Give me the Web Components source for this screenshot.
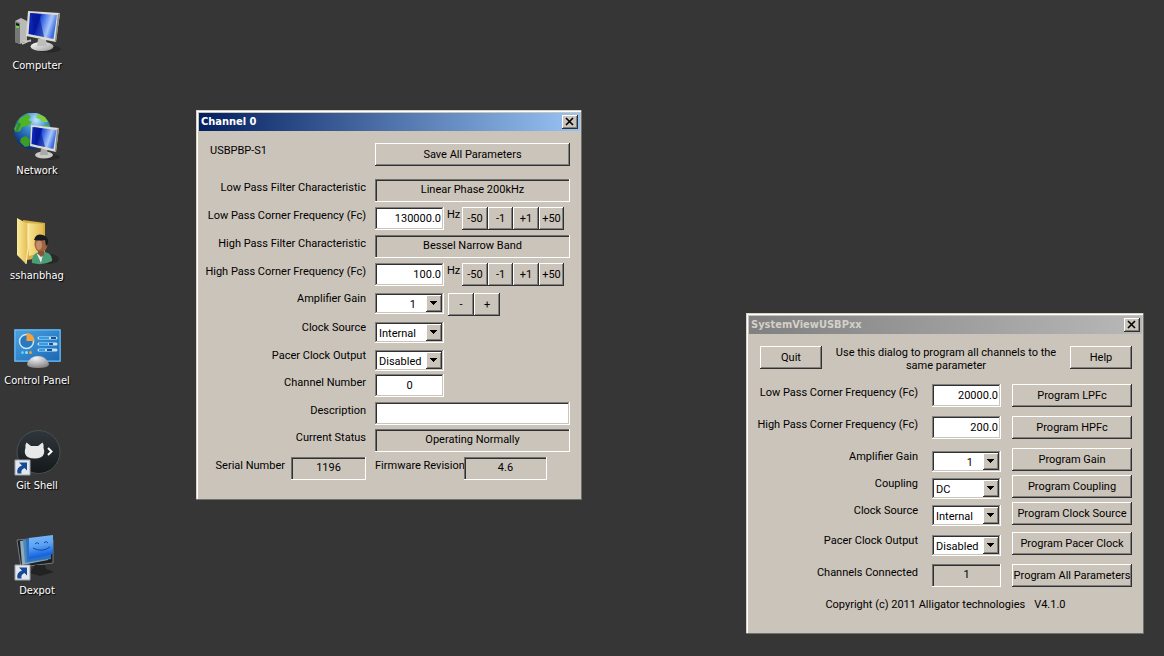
<!DOCTYPE html>
<html lang="en">
<head>
<meta charset="utf-8">
<title>Desktop</title>
<style>
  html, body { margin: 0; height: 100%; }
  body { background: #363636; overflow: hidden; }
</style>
</head>
<body>
<desk-top>
  <desk-icon slot="icons" label="Computer">
    <svg viewBox="0 0 48 48" aria-hidden="true">
      <defs>
        <linearGradient id="scr" x1="0" y1="0" x2="1" y2="0.3"><stop offset="0" stop-color="#0e2fc0"/><stop offset=".4" stop-color="#0519a8"/><stop offset=".45" stop-color="#1d4fe0"/><stop offset=".8" stop-color="#a9c6f8"/><stop offset="1" stop-color="#3d6ee6"/></linearGradient>
        <linearGradient id="met" x1="0" y1="0" x2="1" y2="1"><stop offset="0" stop-color="#fff"/><stop offset="1" stop-color="#9a9a98"/></linearGradient>
      </defs>
      <ellipse cx="36" cy="41" rx="12" ry="3.500" fill="#282828"/>
      <path d="M2 13l6-3 6 3v20l-7 3-5-2z" fill="#b9b9b7"/><path d="M2 13l5 2v21l-5-2z" fill="#777"/><path d="M3 15l3 1v2l-3-1z" fill="#111"/><path d="M3 18h3v2H3z" fill="#5fdc32"/>
      <path d="M9 36l9-4M10 33h8" stroke="#c4c4c0" stroke-width="1.500"/>
      <ellipse cx="29" cy="38.500" rx="11.500" ry="4.500" fill="url(#met)"/><path d="M25 31h8l1 7h-10z" fill="#bdbdbb"/>
      <path d="M15 3l32 2-4 29-30-6z" fill="#dedbd2"/><path d="M47 5l-4 29-1-1 3-27z" fill="#8b8b88"/>
      <path d="M17 5l27 2-3.500 24-25-5z" fill="url(#scr)"/><path d="M18 5l8 1 5 23-9-2z" fill="#061590" opacity=".6"/>
    </svg>
  </desk-icon>
  <desk-icon slot="icons" label="Network">
    <svg viewBox="0 0 48 48" aria-hidden="true">
      <defs>
        <radialGradient id="glb" cx=".6" cy=".2" r=".8"><stop offset="0" stop-color="#bfe6fa"/><stop offset=".4" stop-color="#3a8bd0"/><stop offset="1" stop-color="#0c2f7c"/></radialGradient>
        <linearGradient id="scr2" x1="0" y1="0" x2="1" y2="0.3"><stop offset="0" stop-color="#0e2fc0"/><stop offset=".4" stop-color="#0519a8"/><stop offset=".45" stop-color="#1d4fe0"/><stop offset=".8" stop-color="#a9c6f8"/><stop offset="1" stop-color="#3d6ee6"/></linearGradient>
      </defs>
      <circle cx="19.500" cy="18" r="18.500" fill="url(#glb)"/>
      <path d="M7 5l8-4 3 3-3 3 4 2-4 4-6 1-2 4-4 1-2-3z" fill="#4db526"/><path d="M25 1l7 3 3 5-6 0-2-3-4-1z" fill="#7cd03c"/><path d="M8 25l5-2 4 4-1 6-4 1-5-5z" fill="#3c9c24"/><path d="M31 12l5 0 1 6-4 1z" fill="#49b428"/><path d="M5 9l3 2-3 8-3 0z" fill="#2f8f3c"/>
      <ellipse cx="37" cy="44" rx="10" ry="3" fill="#282828"/>
      <ellipse cx="31" cy="42" rx="9" ry="3.500" fill="#c9c9c6"/><path d="M28 36h6l1 6h-8z" fill="#aaa"/>
      <path d="M18 12l28 3-3 24-26-6z" fill="#dedbd2"/><path d="M46 15l-3 24-1-1 2-22z" fill="#8b8b88"/>
      <path d="M19.500 14l24 3-3 19-22-5z" fill="url(#scr2)"/><path d="M21 14l6 1 5 19-9-2z" fill="#061590" opacity=".6"/>
    </svg>
  </desk-icon>
  <desk-icon slot="icons" label="sshanbhag">
    <svg viewBox="0 0 48 48" aria-hidden="true">
      <defs><linearGradient id="fol" x1="0" y1="0" x2="1" y2="0"><stop offset="0" stop-color="#fbeb9c"/><stop offset="1" stop-color="#e3bb52"/></linearGradient></defs>
      <path d="M10 2l22 3v34l-18 3z" fill="#d8ae43"/><path d="M13 5l17 1v28l-14 4z" fill="url(#fol)"/>
      <path d="M4 0l11 6-1 34-1 6L4 37z" fill="url(#fol)"/><path d="M15 6v24l-2 16" stroke="#fff3bb" fill="none"/>
      <ellipse cx="36" cy="41" rx="10" ry="5" fill="#282828"/>
      <path d="M19 45q-1-9 7-11h6q8 2 7 9-9 5-20 2z" fill="#4b9d76"/><path d="M24 36l4 9 2-9z" fill="#e8eef0"/>
      <ellipse cx="28" cy="26" rx="6.500" ry="8.500" fill="#9c6543"/><path d="M25 33h6v4l-3 2-3-3z" fill="#8b5535"/>
      <ellipse cx="26" cy="27" rx="3" ry="5" fill="#c58d66"/>
      <path d="M21 22q2-7 9-5 6 2 5 9l-2 2-1-6q-5 1-11 0z" fill="#191a1c"/>
    </svg>
  </desk-icon>
  <desk-icon slot="icons" label="Control Panel">
    <svg viewBox="0 0 48 48" aria-hidden="true">
      <defs><linearGradient id="cp" x1="0" y1="0" x2="1" y2="1"><stop offset="0" stop-color="#4aa2e0"/><stop offset="1" stop-color="#1c68b4"/></linearGradient>
      <radialGradient id="dome" cx=".4" cy=".2" r=".8"><stop offset="0" stop-color="#f4f4f4"/><stop offset="1" stop-color="#858585"/></radialGradient></defs>
      <path d="M1 6h48v33H1z" fill="#3d8fcf"/><path d="M2 7h45v31H2z" fill="url(#cp)" stroke="#72bdf0"/>
      <circle cx="13.500" cy="18.500" r="7" fill="#2a78c0" stroke="#c8e6f8" stroke-width="1.500"/><path d="M13.500 18V10a8 8 0 0 1 8 8z" fill="#f6a23c"/>
      <g stroke="#bfe4fa" stroke-width="3" stroke-linecap="round"><path d="M26 15h17M26 21h17M26 27h17"/></g>
      <path d="M26 15h10M26 21h9M26 27h6" stroke="#2aa0ec" stroke-width="2"/><path d="M38 15h5M36 21h4M34 27h5" stroke="#15519c" stroke-width="2"/>
      <circle cx="9.500" cy="29.500" r="1.500" fill="#50d5f4"/><circle cx="13.500" cy="29.500" r="1.500" fill="#8ee2f4"/><circle cx="17.500" cy="29.500" r="1.500" fill="#f69a32"/>
      <path d="M14 41q3-8 11-8t11 8q0 4-11 4t-11-4z" fill="url(#dome)"/>
    </svg>
  </desk-icon>
  <desk-icon slot="icons" label="Git Shell">
    <svg viewBox="0 0 48 48" aria-hidden="true">
      <defs><linearGradient id="git" x1="0" y1="0" x2="0" y2="1"><stop offset="0" stop-color="#30373c"/><stop offset="1" stop-color="#14181b"/></linearGradient></defs>
      <circle cx="25.500" cy="24" r="21.500" fill="url(#git)" stroke="#4a4f52"/>
      <path d="M13.500 14.500l4.500 3.500h7l4.500-3.500q1.500 2 1 5 1 3 .500 6-1.500 5-9.500 5t-9.500-5q-.500-3 .500-6-.500-3 1-5z" fill="#e8e8e8"/>
      <path d="M35 20l3.500 3.500L35 27" fill="none" stroke="#fff" stroke-width="2"/>
      <path d="M2 32h15v15H2z" fill="#e4e8ee" stroke="#9aa4b0"/><path d="M4.500 45.500q-1.500-6 4.500-8l-3-3h8v8l-2.500-2.500q-4 1.500-3 5.500z" fill="#164a94"/>
    </svg>
  </desk-icon>
  <desk-icon slot="icons" label="Dexpot">
    <svg viewBox="0 0 48 48" aria-hidden="true">
      <defs><linearGradient id="dx" x1="0" y1="0" x2=".2" y2="1"><stop offset="0" stop-color="#7dbcf8"/><stop offset=".5" stop-color="#5aa2f4"/><stop offset="1" stop-color="#0a58e0"/></linearGradient></defs>
      <path d="M4 7l34-3 2 3v23L8 34z" fill="#1b1d20" stroke="#77797c"/><path d="M22 32h10l1 4 8 3-14 4-10-3z" fill="#222"/>
      <path d="M7 8l28-3v22L9 32z" fill="#8fa9bd"/><path d="M10 7l28-3v22l-26 4z" fill="#4e88b8"/><path d="M13 6l25-3v22l-24 4z" fill="#2a70c4"/>
      <path d="M16 5l24-3v19l-24 5z" fill="url(#dx)"/>
      <path d="M22 11q2-3 4 0M31 10q2-3 4 0M20 15q9 5 17-1" fill="none" stroke="#174b9c"/>
      <path d="M2 32h15v15H2z" fill="#e4e8ee" stroke="#9aa4b0"/><path d="M4.500 45.500q-1.500-6 4.500-8l-3-3h8v8l-2.500-2.500q-4 1.500-3 5.500z" fill="#164a94"/>
    </svg>
  </desk-icon>
  <channel-dialog></channel-dialog>
  <system-dialog></system-dialog>
</desk-top>

<script>
const BASE = `
  * { box-sizing: border-box; }
  :host { --face: #cbc4ba; position: absolute; font: 11px Roboto, "Liberation Sans", sans-serif; color: #000; }
  button, input, select, output { font: inherit; color: inherit; margin: 0; border-radius: 0; }
  button {
    height: 23px; padding: 0; border: 0; background: var(--face); text-align: center;
    box-shadow: inset -1px -1px #303030, inset 1px 1px #fff, inset -2px -2px #808080;
  }
  .sunk, input, select {
    display: block; border: 0; background: #fff; appearance: none; outline: 0;
    box-shadow: inset -1px -1px #fff, inset 1px 1px #808080, inset -2px -2px var(--face), inset 2px 2px #303030;
  }
  input, output { height: 23px; padding: 2px 3px 3px; line-height: 18px; }
  output.sunk {
    text-align: center; background: var(--face);
    box-shadow: inset -1px -1px #fff, inset 1px 1px #707070, inset 2px 2px #303030;
  }
  input.num { text-align: right; }
  input.mid { text-align: center; }
  .combo { display: grid; height: 21px; }
  .combo > * { grid-area: 1 / 1; }
  select { width: 100%; height: 21px; padding: 2px 20px 0 4px; }
  select.num { text-align-last: right; padding-right: 28px; }
  .drop {
    justify-self: end; width: 16px; height: 17px; margin: 2px; pointer-events: none;
    background: var(--face); box-shadow: inset -1px -1px #303030, inset 1px 1px #fff, inset -2px -2px #808080;
  }
  label, .text { line-height: 18px; white-space: nowrap; }
`;
const combo = (id, value, cls = '') => `
  <span class="combo"><select id="${id}" class="${cls}"><option>${value}</option></select>
  <svg class="drop" viewBox="0 0 16 17" aria-hidden="true" shape-rendering="crispEdges"><path d="M4 6h7v1h-1v1h-1v1h-1v1h-1v-1h-1v-1h-1v-1h-1z"/></svg></span>`;

class Base extends HTMLElement {
  constructor() {
    super();
    this.attachShadow({ mode: 'open' }).innerHTML = this.view();
  }
}

customElements.define('desk-top', class extends Base {
  view() {
    return `<style>
      :host { display: block; position: relative; min-height: 100vh; overflow: hidden; }
      nav { display: flex; flex-direction: column; gap: 40px; width: 74px; padding-top: 8px; }
    </style><nav><slot name="icons"></slot></nav><slot></slot>`;
  }
});

customElements.define('desk-icon', class extends Base {
  view() {
    return `<style>
      :host { display: block; font: 11px "DejaVu Sans Condensed", "DejaVu Sans", sans-serif; color: #fff; }
      figure { margin: 0; display: flex; flex-direction: column; align-items: center; gap: 3px; }
      ::slotted(svg) { display: block; width: 48px; height: 48px; }
      figcaption { line-height: 14px; white-space: nowrap; text-shadow: 1px 1px 1px #000; }
    </style><figure><slot></slot><figcaption></figcaption></figure>`;
  }
  connectedCallback() {
    this.shadowRoot.querySelector('figcaption').textContent = this.getAttribute('label');
  }
});

customElements.define('window-frame', class extends Base {
  view() {
    return `<style>
      :host { display: block; box-sizing: border-box; padding: 3px 2px 20px 3px; background: var(--face);
        box-shadow: inset -1px -1px #707070, inset 1px 1px #d8d2ca, inset 2px 2px #fff; }
      header { display: flex; align-items: center; justify-content: space-between; height: 18px; padding: 0 2px;
        background: var(--bar); color: var(--bar-ink); font: bold 11px/18px "DejaVu Sans Condensed", "DejaVu Sans", sans-serif; }
      button { width: 16px; height: 14px; margin: 0; padding: 0; border: 0; background: var(--face);
        box-shadow: inset -1px -1px #303030, inset 1px 1px #fff, inset -2px -2px #808080; }
      svg { display: block; width: 16px; height: 14px; }
    </style>
    <header><span></span><button aria-label="Close"><svg viewBox="0 0 16 14" aria-hidden="true"><path d="M4 3l7 7M11 3l-7 7" stroke="#000" stroke-width="1.600"/></svg></button></header>
    <slot></slot>`;
  }
  connectedCallback() {
    this.shadowRoot.querySelector('span').textContent = this.getAttribute('caption');
  }
});

customElements.define('channel-dialog', class extends Base {
  view() {
    const steps = p => `<span class="steps">${['-50', '-1', '+1', '+50'].map(t => `<button type="button" aria-label="${p} ${t}">${t}</button>`).join('')}</span>`;
    return `<style>${BASE}
      :host { --bar: linear-gradient(90deg, #04205f, #98c4f4); --bar-ink: #fff; left: 196px; top: 110px; width: 386px; }
      form { display: grid; grid-template-columns: 156px 1fr; column-gap: 9px; padding: 12px 10px 0 11px;
        grid-template-rows: 36px repeat(3, 28px) 30px 29px 28px 24px 28px 27px 28px 23px; align-items: start; }
      form > label { justify-self: end; }
      .short { line-height: 12px; }
      .text { line-height: 16px; }
      .row { display: grid; grid-template-columns: 69px 15px 1fr; align-items: start; }
      .row .text { padding-left: 3px; }
      .small, .gain .combo { width: 69px; }
      .steps { display: grid; grid-template-columns: repeat(2, 26px 25px); padding-left: 3px; }
      .gain { display: flex; }
      .pair { display: flex; margin-left: 4px; }
      .pair button { width: 26px; }
      .wide { width: 100%; }
      .last { grid-column: 1 / -1; display: grid; grid-template-columns: 75px 75px 88px 81px; column-gap: 6px; }
      .last label:first-child { text-align: right; }
      .last label:nth-of-type(2) { padding-left: 3px; }
      .last output:last-child { margin-left: -2px; }
    </style>
    <window-frame caption="Channel 0"><form>
      <span class="text">USBPBP-S1</span><button type="button" class="wide">Save All Parameters</button>
      <label for="lpc">Low Pass Filter Characteristic</label><output id="lpc" class="sunk">Linear Phase 200kHz</output>
      <label for="lpf">Low Pass Corner Frequency (Fc)</label><div class="row"><input id="lpf" class="num" value="130000.0"><span class="text">Hz</span>${steps('Low pass')}</div>
      <label for="hpc">High Pass Filter Characteristic</label><output id="hpc" class="sunk">Bessel Narrow Band</output>
      <label for="hpf">High Pass Corner Frequency (Fc)</label><div class="row"><input id="hpf" class="num" value="100.0"><span class="text">Hz</span>${steps('High pass')}</div>
      <label class="short" for="gain">Amplifier Gain</label><div class="gain">${combo('gain', '1', 'num')}<span class="pair"><button type="button">-</button><button type="button">+</button></span></div>
      <label class="short" for="clk">Clock Source</label><div class="small">${combo('clk', 'Internal')}</div>
      <label class="short" for="pacer">Pacer Clock Output</label><div class="small">${combo('pacer', 'Disabled')}</div>
      <label for="chan">Channel Number</label><input id="chan" class="mid small" value="0">
      <label for="desc">Description</label><input id="desc" class="wide">
      <label for="stat">Current Status</label><output id="stat" class="sunk">Operating Normally</output>
      <div class="last"><label for="ser">Serial Number</label><output id="ser" class="sunk">1196</output><label for="fw">Firmware Revision</label><output id="fw" class="sunk">4.6</output></div>
    </form></window-frame>`;
  }
});

customElements.define('system-dialog', class extends Base {
  view() {
    return `<style>${BASE}
      :host { --bar: linear-gradient(90deg, #808080, #b8b8b8); --bar-ink: #d4d0c8; left: 746px; top: 313px; width: 398px; }
      .top { display: grid; grid-template-columns: 62px 1fr 62px; padding: 12px 10px 0 11px; }
      .top p { margin: 0; text-align: center; line-height: 13px; }
      form { display: grid; grid-template-columns: 158px 69px 120px; justify-content: end; column-gap: 11px; padding: 12px 10px 0 0;
        grid-template-rows: 32px 32px 27px 27px 30px 32px 24px; align-items: start; }
      form > label { justify-self: end; padding-right: 3px; }
      form > .combo { margin-top: 3px; }
      footer { display: flex; justify-content: center; gap: 9px; padding-top: 8px; line-height: 18px; }
    </style>
    <window-frame caption="SystemViewUSBPxx">
      <div class="top"><button type="button">Quit</button><p>Use this dialog to program all channels to the<br>same parameter</p><button type="button">Help</button></div>
      <form>
      <label for="lpf">Low Pass Corner Frequency (Fc)</label><input id="lpf" class="num" value="20000.0"><button type="button">Program LPFc</button>
      <label for="hpf">High Pass Corner Frequency (Fc)</label><input id="hpf" class="num" value="200.0"><button type="button">Program HPFc</button>
      <label for="gain">Amplifier Gain</label>${combo('gain', '1', 'num')}<button type="button">Program Gain</button>
      <label for="coup">Coupling</label>${combo('coup', 'DC')}<button type="button">Program Coupling</button>
      <label for="clk">Clock Source</label>${combo('clk', 'Internal')}<button type="button">Program Clock Source</button>
      <label for="pacer">Pacer Clock Output</label>${combo('pacer', 'Disabled')}<button type="button">Program Pacer Clock</button>
      <label for="conn">Channels Connected</label><output id="conn" class="sunk">1</output><button type="button">Program All Parameters</button>
      </form>
      <footer><span>Copyright (c) 2011 Alligator technologies</span><span>V4.1.0</span></footer>
    </window-frame>`;
  }
});
</script>
</body>
</html>
